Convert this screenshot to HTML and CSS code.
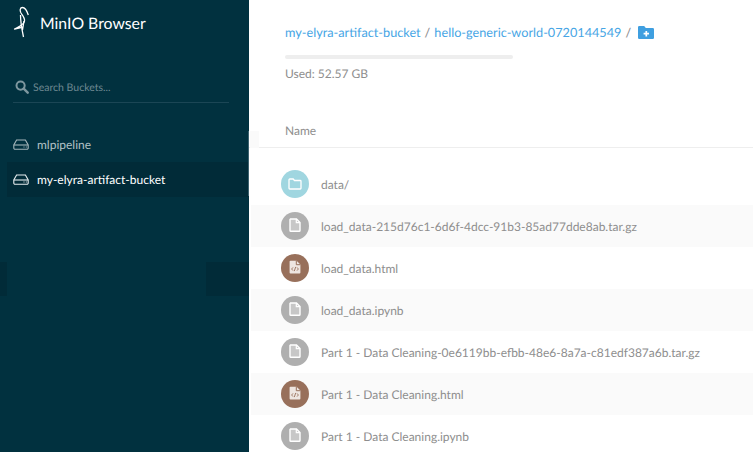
FILE: index.html
```html
<!DOCTYPE html>
<html lang="en">
<head>
  <meta charset="UTF-8" />
  <title>MinIO Browser</title>
  <link rel="stylesheet" href="styles.css">
</head>
<body>
<svg width="0" height="0" class="defs">
  <symbol id="disk" viewBox="0 0 16 11">
    <path d="M3.600 1h8.800l2.800 5v3a1.200 1.200 0 0 1-1.200 1.200H2A1.200 1.200 0 0 1 .8 9V6z" fill="none" stroke="currentColor" stroke-width="1.100"/>
    <path d="M1 6h14" stroke="currentColor" stroke-width="1.100"/>
    <path d="M10.500 8h1M12.800 8h1" stroke="currentColor" stroke-width="1.100"/>
  </symbol>
  <symbol id="file" viewBox="0 0 12 14">
    <path d="M1.500 1h6L11 4.500v8a.8.800 0 0 1-.8.800H1.800a.8.800 0 0 1-.8-.8V1.500z" fill="#fff" fill-opacity=".3" stroke="currentColor" stroke-width="1.400"/>
    <path d="M7.300 1v3.700H11" fill="none" stroke="currentColor" stroke-width="1.200"/>
  </symbol>
  <symbol id="code" viewBox="0 0 12 14">
    <path d="M1.600 .7h6L11.400 4.500v8a.9.900 0 0 1-.9.900h-9a.9.900 0 0 1-.9-.9V1.600a.9.900 0 0 1 .9-.9z" fill="#eee6e1"/>
    <path d="M7.300 .7v4h4" fill="none" stroke="#98705b" stroke-width="1"/>
    <path d="M4 7.400 2.600 9 4 10.600M8 7.400 9.400 9 8 10.600M6.700 6.900 5.300 11.100" fill="none" stroke="#98705b" stroke-width=".9"/>
  </symbol>
</svg>

<div class="app">
  <aside class="sidebar">
    <div class="brand">
      <svg class="logo" viewBox="12 5 18 34" width="18" height="34">
        <path d="M28.300 15C27 11 25 7.500 22.500 7.500 20 7.500 19.500 10.500 21 13c2 3 4 5 3.500 8-.5 4-6.500 6-10 8l6.500-1.500" fill="none" stroke="#fff" stroke-width="1.300" stroke-linejoin="round"/>
        <path d="M20.500 15c0 7 1.500 15 3 22M24 21l-1.500 9" fill="none" stroke="#fff" stroke-width="1.300"/>
      </svg>
      <span class="brand-name">MinIO Browser</span>
    </div>

    <div class="search">
      <svg viewBox="0 0 14 14" width="14" height="14" class="search-icon">
        <circle cx="5.600" cy="5.600" r="4.100" fill="none" stroke="currentColor" stroke-width="2"/>
        <path d="M8.700 8.700l4 4" stroke="currentColor" stroke-width="2.400" stroke-linecap="round"/>
      </svg>
      <span class="search-text">Search Buckets...</span>
    </div>

    <ul class="buckets">
      <li class="bucket"><svg class="disk"><use href="#disk"/></svg>mlpipeline</li>
      <li class="bucket active"><svg class="disk"><use href="#disk"/></svg>my-elyra-artifact-bucket</li>
    </ul>

    <div class="ghost ghost-left"></div>
    <div class="ghost ghost-right"></div>
    <div class="edge-line"></div>
  </aside>

  <main class="content">
    <header class="top">
      <div class="crumbs">
        <a>my-elyra-artifact-bucket</a><span class="sep">/</span><a>hello-generic-world-0720144549</a><span class="sep">/</span>
        <svg class="new-folder" viewBox="0 0 16 13" width="16" height="13">
          <path d="M1.200 0h5l1.600 2h7a1.200 1.200 0 0 1 1.200 1.200v8.600a1.200 1.200 0 0 1-1.200 1.200H1.200A1.200 1.200 0 0 1 0 11.800V1.200A1.200 1.200 0 0 1 1.200 0z" fill="#3f9fe0"/>
          <path d="M8.300 5v5.400M5.600 7.700H11" stroke="#fff" stroke-width="1.700"/>
        </svg>
      </div>
      <div class="usage"><div class="usage-bar"></div></div>
      <div class="used">Used: 52.57 GB</div>
    </header>

    <div class="list-head">Name</div>

    <ul class="files">
      <li class="row"><span class="badge folder"><svg viewBox="0 0 14 12" width="14" height="12"><path d="M1 1.800A.8.800 0 0 1 1.800 1h3.400l1.300 1.500h5.700a.8.800 0 0 1 .8.800v6.900a.8.800 0 0 1-.8.800H1.800a.8.800 0 0 1-.8-.8z" fill="none" stroke="#fff" stroke-width="1.300"/></svg></span>data/</li>
      <li class="row"><span class="badge plain"><svg class="doc"><use href="#file"/></svg></span>load_data-215d76c1-6d6f-4dcc-91b3-85ad77dde8ab.tar.gz</li>
      <li class="row"><span class="badge html"><svg class="doc"><use href="#code"/></svg></span>load_data.html</li>
      <li class="row"><span class="badge plain"><svg class="doc"><use href="#file"/></svg></span>load_data.ipynb</li>
      <li class="row"><span class="badge plain"><svg class="doc"><use href="#file"/></svg></span>Part 1 - Data Cleaning-0e6119bb-efbb-48e6-8a7a-c81edf387a6b.tar.gz</li>
      <li class="row"><span class="badge html"><svg class="doc"><use href="#code"/></svg></span>Part 1 - Data Cleaning.html</li>
      <li class="row"><span class="badge plain"><svg class="doc"><use href="#file"/></svg></span>Part 1 - Data Cleaning.ipynb</li>
    </ul>
    <div class="edge-tab"></div>
  </main>
</div>
</body>
</html>
```
FILE: styles.css
```css
*{box-sizing:border-box}
html,body{margin:0;height:100%;overflow:hidden}
body{font-family:Lato,"Open Sans",Arial,sans-serif;background:#fff;color:#8e8e8e;text-rendering:geometricPrecision}
ul{list-style:none;margin:0;padding:0}
.defs{position:absolute}

.app{display:flex;height:452px}

.sidebar{position:relative;flex:0 0 249px;background:#01313f;color:#fff}
.brand{display:flex;align-items:center;height:46px;padding:0 0 0 12px}
.logo{flex:none;margin-top:-2px}
.brand-name{margin-left:10px;font-size:15.800px;margin-top:1px}
.search{display:flex;align-items:center;height:33px;margin:24px 20px 0 13px;border-bottom:1px solid #1b4655;padding:0 0 0 2px;color:#7e979f}
.search-icon{flex:none;margin-top:1px}
.search-text{margin-left:4px;margin-top:3px;font-size:10.500px;color:#6d8891}
.buckets{margin-top:24px}
.bucket{display:flex;align-items:center;height:35px;padding-left:13px;font-size:12px;color:#b2c0c5}
.bucket.active{margin-left:7px;padding-left:6px;background:#012b38;color:#fff}
.disk{width:16px;height:11px;margin-right:8px;color:#a5b6bb}
.active .disk{color:#e8eef0}
.ghost{position:absolute;top:262px;height:34px;background:#012b38}
.ghost-left{left:0;width:7px}
.ghost-right{right:0;width:43px}
.edge-line{position:absolute;right:0;top:131px;width:1px;height:65px;background:#3d6370}

.content{position:relative;flex:1;min-width:0;overflow:hidden}
.top{padding:24px 0 0 36px}
.crumbs{display:flex;align-items:center;height:16px;font-size:12.700px;white-space:nowrap}
.crumbs a{color:#46a5e5}
.sep{margin:0 4px;color:#8e8e8e}
.new-folder{margin-left:3px;margin-top:1px}
.usage{width:228px;height:4px;margin-top:15px;background:#eee;border-radius:2px}
.used{margin-top:7px;font-size:12px;line-height:16px}
.list-head{margin-top:41px;padding:0 0 9px 36px;height:25px;font-size:12px;line-height:16px;border-bottom:1px solid #eee}

.files{margin-top:15px}
.row{display:flex;align-items:center;height:42px;padding-left:32px;font-size:12px;white-space:nowrap}
.row:nth-child(even){background:#fafafa;margin-left:2px;padding-left:30px}
.badge{display:flex;align-items:center;justify-content:center;flex:none;width:28px;height:28px;margin-right:12px;border-radius:50%;color:#fff}
.folder{background:#a0d6e0}
.plain{background:#afafaf}
.html{background:#98705b}
.doc{width:12px;height:14px;margin-top:-2px}
.edge-tab{position:absolute;left:1px;top:131px;width:9px;height:17px;background:#fafafa}
```
